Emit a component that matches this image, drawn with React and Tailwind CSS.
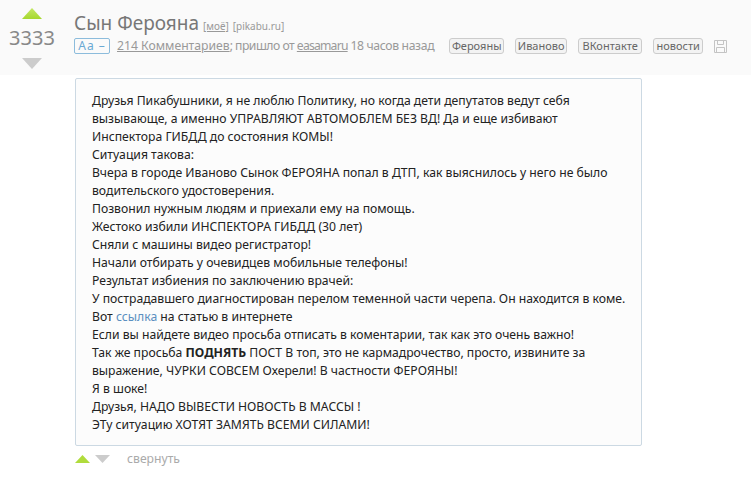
const lines = [
  "Друзья Пикабушники, я не люблю Политику, но когда дети депутатов ведут себя",
  "вызывающе, а именно УПРАВЛЯЮТ АВТОМОБЛЕМ БЕЗ ВД! Да и еще избивают",
  "Инспектора ГИБДД до состояния КОМЫ!",
  "Ситуация такова:",
  "Вчера в городе Иваново Сынок ФЕРОЯНА попал в ДТП, как выяснилось у него не было",
  "водительского удостоверения.",
  "Позвонил нужным людям и приехали ему на помощь.",
  "Жестоко избили ИНСПЕКТОРА ГИБДД (30 лет)",
  "Сняли с машины видео регистратор!",
  "Начали отбирать у очевидцев мобильные телефоны!",
  "Результат избиения по заключению врачей:",
  "У пострадавшего диагностирован перелом теменной части черепа. Он находится в коме.",
];
const lines3 = [
  "выражение, ЧУРКИ СОВСЕМ Охерели! В частности ФЕРОЯНЫ!",
  "Я в шоке!",
  "Друзья, НАДО ВЫВЕСТИ НОВОСТЬ В МАССЫ !",
  "ЭТу ситуацию ХОТЯТ ЗАМЯТЬ ВСЕМИ СИЛАМИ!",
];

function UpArrow() {
  return (
    <svg width="20" height="11" viewBox="0 0 20 11">
      <defs>
        <linearGradient id="up" x1="0" y1="0" x2="0" y2="1">
          <stop offset="0" stopColor="#c4e866" />
          <stop offset="1" stopColor="#a6d82e" />
        </linearGradient>
      </defs>
      <path d="M10 0 L20 11 L0 11 Z" fill="url(#up)" />
    </svg>
  );
}

function DownArrow({ className }) {
  return (
    <svg width="20" height="11" viewBox="0 0 20 11" className={className}>
      <path d="M0 0 L20 0 L10 11 Z" fill="#cccccc" />
    </svg>
  );
}

function SaveIcon() {
  return (
    <svg width="13" height="13" viewBox="0 0 13 13" className="ml-[11px] shrink-0" fill="none" stroke="#c4c4c4" strokeWidth="1">
      <path d="M0.5 0.5 H12.5 V12.5 H0.5 Z" />
      <path d="M3.5 0.5 V4.5 H9.5 V0.5" />
      <path d="M2.5 12.5 V7.5 H10.5 V12.5" />
    </svg>
  );
}

function Tag({ className, children }) {
  return (
    <span className={`flex h-[16px] items-center justify-center rounded-[3px] border border-[#ccc] bg-[#f3f3f3] text-[11px] text-[#666] ${className}`}>
      {children}
    </span>
  );
}

export default function App() {
  return (
    <div
      className="w-[751px] h-[482px] overflow-hidden bg-white text-[12.2px] text-[#222]"
      style={{ fontFamily: '"Noto Sans", sans-serif' }}
    >
      <div className="flex h-[75px] bg-[#fafafa]">
        <div className="flex w-[64px] flex-col items-center pt-[8px]">
          <UpArrow />
          <div className="mt-[6px] text-[20px] leading-[26px] text-[#888]">3333</div>
          <DownArrow className="mt-[7px]" />
        </div>
        <div className="ml-[10px] flex flex-col pt-[11px] whitespace-nowrap">
          <div className="flex h-[24px] items-baseline leading-[24px]">
            <span className="text-[19px] text-[#777]">Сын Ферояна</span>
            <span className="ml-[4px] text-[10px] leading-none text-[#999] underline">[моё]</span>
            <span className="ml-[4px] text-[10px] leading-none text-[#999]">[pikabu.ru]</span>
          </div>
          <div className="mt-[2px] flex h-[18px] items-center text-[#999]">
            <span className="flex h-[16px] w-[36px] items-center justify-center rounded-[2px] border border-[#8cbcdc] text-[12px] tracking-[1px] text-[#69a9d4]">
              Aa –
            </span>
            <span className="ml-[7px] underline">214 Комментариев</span>
            <span className="whitespace-pre tracking-[-0.5px]">; пришло от </span>
            <span className="tracking-[-0.8px] underline">easamaru</span>
            <span className="whitespace-pre tracking-[-0.35px]"> 18 часов назад</span>
            <div className="ml-[15px] flex items-center gap-[11px]">
              <Tag className="w-[55px]">Ферояны</Tag>
              <Tag className="w-[52px]">Иваново</Tag>
              <Tag className="w-[64px]">ВКонтакте</Tag>
              <Tag className="w-[50px]">новости</Tag>
            </div>
            <SaveIcon />
          </div>
        </div>
      </div>

      <div className="ml-[75px] mt-[3px] h-[368px] w-[567px] rounded-[2px] border border-[#ccd9e3] bg-[#fcfcfc] pl-[16px] pt-[13px] leading-[18px]">
        {lines.map((l) => (
          <div key={l} className="whitespace-nowrap">{l}</div>
        ))}
        <div className="whitespace-nowrap">
          Вот <span className="text-[#5b8fc0]">ссылка</span> на статью в интернете
        </div>
        <div className="whitespace-nowrap">Если вы найдете видео просьба отписать в коментарии, так как это очень важно!</div>
        <div className="whitespace-nowrap">
          Так же просьба <b>ПОДНЯТЬ</b> ПОСТ В топ, это не кармадрочество, просто, извините за
        </div>
        {lines3.map((l) => (
          <div key={l} className="whitespace-nowrap">{l}</div>
        ))}
      </div>

      <div className="ml-[75px] mt-[4px] flex h-[18px] items-center">
        <svg width="15" height="8" viewBox="0 0 15 8"><path d="M7.5 0 L15 8 L0 8 Z" fill="#b0dc3c" /></svg>
        <svg width="15" height="8" viewBox="0 0 15 8" className="ml-[5px]"><path d="M0 0 L15 0 L7.5 8 Z" fill="#cccccc" /></svg>
        <span className="ml-[17px] text-[#aaa]">свернуть</span>
      </div>
    </div>
  );
}
